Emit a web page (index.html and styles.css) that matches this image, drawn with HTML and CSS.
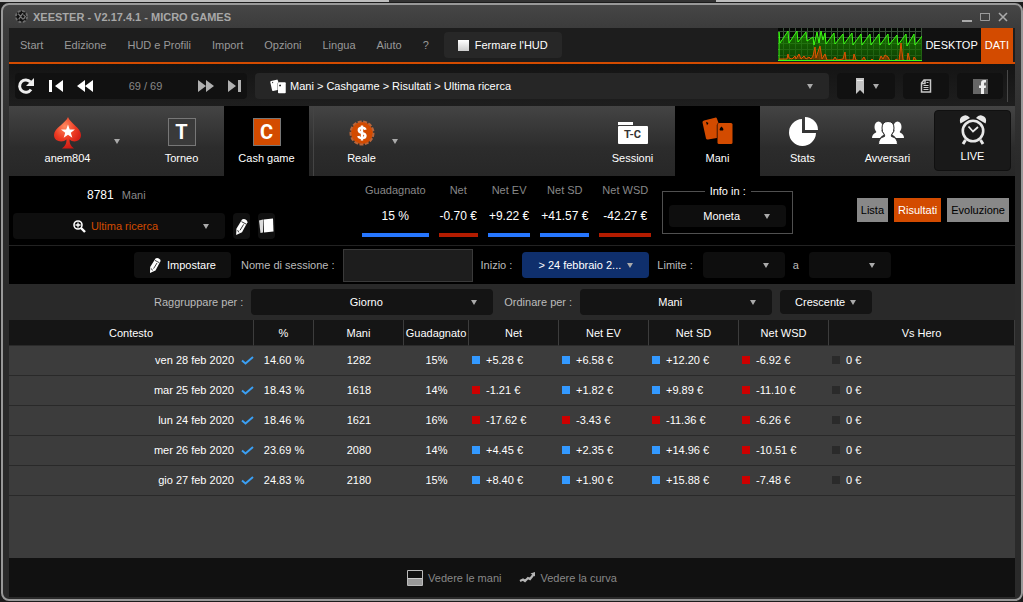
FILE: index.html
```html
<!DOCTYPE html>
<html lang="it">
<head>
    <meta charset="UTF-8">
    <meta name="viewport" content="width=device-width, initial-scale=1.0">
    <title>XEESTER - V2.17.4.1 - MICRO GAMES</title>
    <link rel="stylesheet" href="styles.css">
</head>
<body>
    <!-- shared icons -->
    <svg class="sprite" aria-hidden="true">
        <symbol id="pencil" viewBox="0 0 12 16">
            <path d="M6.5 1.5C8 0 11.8 1.6 11.6 4L6.500 13.500 1 16l.2-6z" fill="#fff"/>
            <path d="M6 3.400l4.300 2.300M8 6l-3.400 5.600M2.400 11.500l1 2" stroke="#111" stroke-width=".8" fill="none"/>
        </symbol>
        <symbol id="cards" viewBox="0 0 31 28">
            <path d="M2 3.500L13 .7q1.500-.5 2 1L16.500 6q-1.700.5-1.700 2v13L6 22.500q-1.500.3-2-1L.5 5.500Q.3 4 2 3.500z" fill="currentColor"/>
            <rect x="15.500" y="6" width="15" height="21" rx="1.500" fill="currentColor"/>
            <path d="M19.500 9.500q2.800 2.500 1.500 4h-3q-1.300-1.500 1.500-4zM4 4.800l2.500 1.200-1.500 2.200z" fill="#000"/>
        </symbol>
    </svg>

    <div class="window">
        <header class="titlebar">
            <svg class="logo" viewBox="0 0 16 16">
                <circle cx="8" cy="8" r="6" fill="#111" stroke="#6c6c6c" stroke-width="2" stroke-dasharray="3 1.7"/>
                <path d="M4.500 5l5 6M9.500 4.500L5 11M10 6l2 2-2 3" stroke="#777" stroke-width="1.400" fill="none"/>
            </svg>
            <h1>XEESTER - V2.17.4.1 - MICRO GAMES</h1>
            <div class="window-buttons">
                <button aria-label="Riduci"><svg width="10" height="10"><path d="M0 9h10" stroke="#aaa" stroke-width="2"/></svg></button>
                <button aria-label="Ingrandisci"><svg width="10" height="10"><path d="M.5 1.500h9v7h-9zM0 1.500h10" stroke="#9a9a9a" fill="none"/></svg></button>
                <button aria-label="Chiudi"><svg width="10" height="10"><path d="M1 1l8 8M9 1L1 9" stroke="#aaa" stroke-width="1.600"/></svg></button>
            </div>
        </header>

        <div class="content">
            <nav class="menu">
                <a href="#">Start</a>
                <a href="#">Edizione</a>
                <a href="#">HUD e Profili</a>
                <a href="#">Import</a>
                <a href="#">Opzioni</a>
                <a href="#">Lingua</a>
                <a href="#">Aiuto</a>
                <a href="#">?</a>
                <button class="btn stop-hud"><span class="stop-icon"></span>Fermare l'HUD</button>
                <div class="menu-right">
                    <svg class="monitor" viewBox="0 0 144 33">
                        <defs>
                            <pattern id="grid" width="6" height="6" patternUnits="userSpaceOnUse"><path d="M5.500 0v6M0 3.500h6" stroke="#3a4f3a"/></pattern>
                            <linearGradient id="green" x1="0" y1="0" x2="0" y2="1"><stop offset="0" stop-color="#1f9a00" stop-opacity=".75"/><stop offset="1" stop-color="#115500" stop-opacity=".65"/></linearGradient>
                        </defs>
                        <rect width="144" height="33" fill="#050805"/>
                        <rect width="144" height="33" fill="url(#grid)"/>
                        <path d="M1 32V4l1 11 8-12 1 12 8-12 1 11 8-10 1 9 6-4 1 8 3-13 2 11 2-12 2 9 2-7 1 11 8-11 1 11 8-10 1 10 8-11 1 12 8-11 1 11 8-11 1 11 8-11 1 11 8-11 1 11 8-10 1 10 8-11 1 12 7-12 1 11 8-10 1 11v18z" fill="url(#green)" stroke="#3cff14"/>
                        <path d="M1 31h8l1-5 1 4 3 1 3-3 1 3 3-5 2 5 3-3 2 3 3-2 2 2 2-3 2-9 1 11 4-12 2 13 3-5 2 6h6l2-3 2 3 6-1 2-7 1 8h7l1-6 2 6 5 1 3-4 2 4h4l2-2 2 2h5l2-5 2 3 2-4 3 2 2 4h5l1-2 3 2 2-18 2 17 4 1 1-8 2 8h3l1-4 3 4h4" fill="#8a3a00" fill-opacity=".7" stroke="#e05500"/>
                        <path d="M0 32.500h144" stroke="#3cff14"/>
                    </svg>
                    <a href="#" class="mode">DESKTOP</a>
                    <a href="#" class="mode active">DATI</a>
                </div>
            </nav>

            <div class="navbar">
                <div class="pager">
                    <button aria-label="Aggiorna"><svg width="18" height="18" viewBox="0 0 18 18"><path d="M14 12.500A6.200 6.200 0 1 1 13.500 5" stroke="#eee" stroke-width="3" fill="none"/><path d="M17 1v8H9z" fill="#eee"/></svg></button>
                    <button aria-label="Primo"><svg width="14" height="12"><path d="M0 0h3v12H0zM14 0v12L6 6z" fill="#fff"/></svg></button>
                    <button aria-label="Precedente"><svg width="16" height="12"><path d="M8 0v12L0 6zM16 0v12L8 6z" fill="#fff"/></svg></button>
                    <span class="page-count">69 / 69</span>
                    <button aria-label="Successivo"><svg width="16" height="12"><path d="M0 0v12l8-6zM8 0v12l8-6z" fill="#b0b0b0"/></svg></button>
                    <button aria-label="Ultimo"><svg width="14" height="12"><path d="M0 0v12l8-6zM10 0h3v12h-3z" fill="#b0b0b0"/></svg></button>
                </div>
                <div class="drop breadcrumb">
                    <svg width="16" height="15" class="white"><use href="#cards"/></svg>
                    <select aria-label="Percorso"><option>Mani &gt; Cashgame &gt; Risultati &gt; Ultima ricerca</option></select>
                </div>
                <button class="drop bookmark" aria-label="Segnalibri"><svg width="8" height="16"><path d="M0 0h8v16l-4-4-4 4z" fill="#c4c4c4"/><path d="M1 2.500h6" stroke="#eee"/></svg></button>
                <button class="tool" aria-label="Note"><svg width="12" height="14"><path d="M4 1h6.500v12H1.500V4zM1.500 4.500H5V1" stroke="#c8c8c8" fill="none" stroke-width="1.500"/><path d="M3.500 6.500h5M3.500 8.500h5M3.500 10.500h5M6.500 3.500h2" stroke="#c8c8c8"/></svg></button>
                <button class="tool" aria-label="Facebook"><svg width="15" height="15"><path d="M0 0h15v15H0z" fill="#666"/><path d="M8 15V9H6V6.500h2V4q0-3 3-3h2v2.500h-1.200q-.8 0-.8.800v2.200h2L12.700 9H11v6z" fill="#eee"/></svg></button>
                <span class="separator"></span>
            </div>

            <div class="ribbon">
                <div class="account">
                    <button class="ribbon-item">
                        <svg width="30" height="32" viewBox="0 0 30 32">
                            <defs><radialGradient id="red" cx=".4" cy=".3" r=".8"><stop offset="0" stop-color="#ff8a60"/><stop offset=".5" stop-color="#ec3a22"/><stop offset="1" stop-color="#c51010"/></radialGradient></defs>
                            <path d="M15 0c2 6 13 11 13 18 0 7-8 8-11.500 4.500C16.500 27 18 29 21 31.500H9c3-2.500 4.500-4.500 4.500-9C10 26 1 25 1 18 1 11 13 6 15 0z" fill="url(#red)"/>
                            <path d="M15 7.500l1.700 4.900 5.200.1-4.100 3.200 1.500 5-4.300-3-4.300 3 1.500-5L8 12.500l5.200-.1z" fill="#fff"/>
                        </svg>
                        anem804
                    </button>
                    <span class="caret"></span>
                </div>
                <button class="ribbon-item"><span class="letter">T</span>Torneo</button>
                <button class="ribbon-item active"><span class="letter">C</span>Cash game</button>
                <div class="account reale">
                    <button class="ribbon-item">
                        <svg width="26" height="32" viewBox="0 0 26 32">
                            <circle cx="13" cy="16" r="11" fill="#d34b00"/>
                            <circle cx="13" cy="16" r="11.500" fill="none" stroke="#b9653a" stroke-width="2" stroke-dasharray="4 1.500"/>
                            <circle cx="13" cy="16" r="9.500" fill="#d34b00"/>
                            <path d="M16.500 12.800q-.5-2-3.500-2-3.200 0-3.200 2.400 0 2 3.200 2.700 3.500.8 3.500 2.900 0 2.300-3.500 2.300-3.200 0-3.700-2.100M13 8.500v15" stroke="#fff" stroke-width="2.400" fill="none"/>
                        </svg>
                        Reale
                    </button>
                    <span class="caret"></span>
                </div>
                <button class="ribbon-item push">
                    <span class="folder">T-C</span>
                    Sessioni
                </button>
                <button class="ribbon-item active"><svg width="31" height="28" class="orange raised"><use href="#cards"/></svg>Mani</button>
                <button class="ribbon-item"><svg width="30" height="30" viewBox="0 0 30 30"><path d="M14 2v14h14a13.500 13.500 0 1 1-14-14z" fill="#fff"/><path d="M17 0a13 13 0 0 1 13 13H17z" fill="#fff"/></svg>Stats</button>
                <button class="ribbon-item">
                    <svg width="32" height="24" viewBox="0 0 32 24" class="raised">
                        <g fill="#fff">
                            <ellipse cx="6.500" cy="6" rx="4" ry="5.500"/><path d="M0 17q0-4 4-5.500l1-2h4l3 4Q9 15 8 17z"/>
                            <ellipse cx="25.500" cy="6" rx="4" ry="5.500"/><path d="M32 17q0-4-4-5.500l-1-2h-4l-3 4q3 1.500 4 3.500z"/>
                            <path d="M6.500 23.500q0-7 6-8 .5-1.500-.5-2.500-2-2-2-6 0-6.500 6-6.500t6 6.500q0 4-2 6-1 1-.5 2.500 6 1 6 8z" stroke="#2f2f2f"/>
                        </g>
                    </svg>
                    Avversari
                </button>
                <button class="ribbon-item live">
                    <svg width="28" height="30" viewBox="0 0 28 30">
                        <g fill="none" stroke="#e8e8e8"><circle cx="14" cy="16" r="10.200" stroke-width="2.600"/><path d="M9.500 11.500L14 16.500l5-4.500" stroke-width="1.800"/><path d="M6.500 25L4 29M21.500 25l2.500 4" stroke-width="3"/></g>
                        <path d="M1.500 8.500Q-.5 3 4 1q4-2 7 2zM26.500 8.500Q28.500 3 24 1q-4-2-7 2z" fill="#e8e8e8"/>
                    </svg>
                    LIVE
                </button>
            </div>

            <section class="summary">
                <div class="search">
                    <p class="hands"><b>8781</b> Mani</p>
                    <div class="search-row">
                        <div class="drop last-search">
                            <svg width="13" height="13" viewBox="0 0 13 13"><circle cx="5" cy="5" r="4" fill="none" stroke="#fff" stroke-width="1.600"/><path d="M8 8l4 4" stroke="#fff" stroke-width="2.400"/><path d="M5 2.500v5M2.500 5h5" stroke="#fff" stroke-width="1.300"/></svg>
                            <select aria-label="Ricerca"><option>Ultima ricerca</option></select>
                        </div>
                        <button class="btn small" aria-label="Modifica"><svg width="13" height="17"><use href="#pencil"/></svg></button>
                        <button class="btn small" aria-label="Copia"><svg width="15" height="16" viewBox="0 0 15 16"><path d="M0 2.500L4 1.500v13l-2.500.5z" fill="#ddd"/><path d="M4.500 1.500L14 .5l.5 13L5 14.500z" fill="#fff"/></svg></button>
                    </div>
                </div>
                <dl class="totals">
                    <div class="up"><dt>Guadagnato</dt><dd>15 %</dd></div>
                    <div class="down"><dt>Net</dt><dd>-0.70 €</dd></div>
                    <div class="up"><dt>Net EV</dt><dd>+9.22 €</dd></div>
                    <div class="up"><dt>Net SD</dt><dd>+41.57 €</dd></div>
                    <div class="down"><dt>Net WSD</dt><dd>-42.27 €</dd></div>
                </dl>
                <fieldset class="info">
                    <legend>Info in :</legend>
                    <div class="drop"><select aria-label="Info in"><option>Moneta</option></select></div>
                </fieldset>
                <div class="views">
                    <button>Lista</button>
                    <button class="active">Risultati</button>
                    <button>Evoluzione</button>
                </div>
            </section>

            <form class="filters">
                <button type="button" class="btn set"><svg width="12" height="16"><use href="#pencil"/></svg>Impostare</button>
                <label for="session">Nome di sessione :</label>
                <input type="text" id="session">
                <label for="start">Inizio :</label>
                <div class="drop start"><select id="start"><option>&gt; 24 febbraio 2...</option></select></div>
                <label for="limit">Limite :</label>
                <div class="drop limit"><select id="limit"><option></option></select></div>
                <label for="limit-to">a</label>
                <div class="drop limit"><select id="limit-to"><option></option></select></div>
            </form>

            <form class="grouping">
                <label for="group">Raggruppare per :</label>
                <div class="drop group"><select id="group"><option>Giorno</option></select></div>
                <label for="order">Ordinare per :</label>
                <div class="drop order"><select id="order"><option>Mani</option></select></div>
                <div class="drop direction"><select aria-label="Direzione"><option>Crescente</option></select></div>
            </form>

            <main class="results">
                <table>
                    <colgroup>
                        <col class="c-context"><col class="c-percent"><col class="c-net"><col class="c-gain">
                        <col class="c-net"><col class="c-net"><col class="c-net"><col class="c-net"><col>
                    </colgroup>
                    <thead>
                        <tr><th>Contesto</th><th>%</th><th>Mani</th><th>Guadagnato</th><th>Net</th><th>Net EV</th><th>Net SD</th><th>Net WSD</th><th>Vs Hero</th></tr>
                    </thead>
                    <tbody id="rows"></tbody>
                </table>
            </main>

            <footer class="footer">
                <button><svg width="16" height="16"><path d="M.5.500h15v15H.500z" fill="#111" stroke="#bbb"/><path d="M1 8h14v7H1z" fill="#999"/><path d="M1 8.500h14" stroke="#ccc"/></svg>Vedere le mani</button>
                <button><svg width="16" height="11"><path d="M1 9l3-1.500 2 1.500 3-3 2 1 4-5" stroke="#b5b5b5" stroke-width="2.200" fill="none"/><path d="M11.500 1.500L16 0v4.500z" fill="#b5b5b5"/></svg>Vedere la curva</button>
            </footer>
        </div>
    </div>

    <script src="script.js"></script>
</body>
</html>
```

FILE: styles.css
```css
* {
    box-sizing: border-box;
}

body {
    margin: 0;
    padding: 3px 0 1px 1px;
    height: 100vh;
    font-family: "Liberation Sans", Arial, sans-serif;
    font-size: 11px;
    line-height: 14px;
    color: #fff;
    background: linear-gradient(90deg, #bdbdbd 38%, #333 38%, #333 70%, #bdbdbd 70%) top / 100% 2px no-repeat #1c1c1c;
}

button, select, input {
    font: inherit;
    color: inherit;
    background: none;
    border: 0;
    margin: 0;
    padding: 0;
}

a {
    color: inherit;
    text-decoration: none;
}

svg {
    display: block;
    flex: none;
}

.sprite {
    position: absolute;
    width: 0;
    height: 0;
}

.white {
    color: #fff;
}

.orange {
    color: #d34b00;
}

/* window */
.window {
    display: flex;
    flex-direction: column;
    height: 100%;
    padding: 0 6px 2px;
    border: 2px solid #999;
    border-radius: 8px;
    background: linear-gradient(#464646, #3c3c3c 22px, #2a2a2a 160px, #2a2a2a);
}

.titlebar {
    display: flex;
    align-items: center;
    height: 23px;
    padding: 0 7px 0 5px;
    flex: none;
}

.logo {
    width: 15px;
    height: 15px;
}

.titlebar h1 {
    margin: 0 auto 0 4px;
    font-size: 11px;
    color: #a8a8a8;
}

.window-buttons {
    display: flex;
    gap: 8px;
}

.content {
    display: flex;
    flex-direction: column;
    flex: 1;
    min-height: 0;
    background: #000;
}

/* menu */
.menu {
    display: flex;
    align-items: center;
    gap: 21px;
    height: 36px;
    flex: none;
    padding-left: 11px;
    color: #999;
    background: #1d1d1d;
    border-bottom: 2px solid #d34b00;
}

.btn {
    display: flex;
    align-items: center;
    justify-content: center;
    border-radius: 4px;
    background: #101010;
}

.stop-hud {
    gap: 6px;
    width: 118px;
    height: 26px;
    margin-left: -6px;
    color: #fff;
    background: #272727;
}

.stop-icon {
    width: 11px;
    height: 11px;
    background: linear-gradient(#fff, #ccc);
}

.menu-right {
    display: flex;
    align-self: stretch;
    margin-left: auto;
    padding-right: 2px;
}

.monitor {
    width: 144px;
    height: 33px;
}

.mode {
    display: flex;
    align-items: center;
    padding: 0 3px;
    color: #fff;
    font-size: 11px;
    background: #111;
}

.mode.active {
    padding: 0 4px;
    background: #d34b00;
}

/* navigation */
.navbar {
    display: flex;
    align-items: center;
    gap: 8px;
    height: 42px;
    flex: none;
    padding: 2px 7px 0 6px;
    background: linear-gradient(#141414, #1e1e1e);
}

.pager {
    display: flex;
    align-items: center;
    gap: 14px;
    width: 232px;
    height: 26px;
    padding: 0 5px 0 2px;
    border-radius: 4px;
    background: #111;
}

.page-count {
    flex: 1;
    text-align: center;
    color: #888;
}

.drop {
    position: relative;
    display: flex;
    align-items: center;
    justify-content: center;
    height: 26px;
    border-radius: 4px;
    background: #0e0e0e;
}

.drop::after,
.caret {
    border: 3px solid transparent;
    border-top: 5px solid #aaa;
    border-bottom: 0;
}

.drop::after {
    content: "";
    position: absolute;
    right: 16px;
    pointer-events: none;
}

.drop select {
    appearance: none;
    width: 100%;
    height: 100%;
    padding: 0 12px 0 0;
    text-align-last: center;
}

.breadcrumb {
    flex: 1;
    gap: 4px;
    padding-left: 15px;
    background: #262626;
}

.breadcrumb select {
    text-align-last: left;
}

.bookmark {
    width: 58px;
    padding-right: 12px;
    background: #111;
}

.tool {
    display: flex;
    align-items: center;
    justify-content: center;
    width: 46px;
    height: 26px;
    border-radius: 4px;
    background: #111;
}

.separator {
    width: 1px;
    height: 32px;
    margin-left: -4px;
    background: #484848;
}

/* ribbon */
.ribbon {
    display: flex;
    height: 70px;
    flex: none;
    padding-right: 4px;
    background: linear-gradient(#444, #2c2c2c 60%, #272727);
}

.ribbon-item {
    display: flex;
    flex-direction: column;
    align-items: center;
    justify-content: flex-end;
    gap: 4px;
    width: 85px;
    padding-bottom: 11px;
}

.ribbon-item.active {
    background: #000;
}

.account {
    display: flex;
    align-items: center;
    width: 130px;
    padding-left: 16px;
}

.account .ribbon-item {
    height: 100%;
    gap: 2px;
}

.reale {
    margin-left: 4px;
    padding-left: 5px;
    border-left: 1px solid #444;
}

.caret {
    margin-left: 4px;
}

.reale .caret {
    margin-left: -12px;
}

.letter {
    width: 28px;
    height: 28px;
    margin-bottom: 1px;
    border: 1px solid #777;
    font: bold 20px/26px Roboto, sans-serif;
    background: #3a3a3a;
}

.active .letter {
    background: #d34b00;
}

.raised {
    margin-bottom: 2px;
}

.folder {
    position: relative;
    width: 30px;
    height: 18px;
    margin-bottom: 3px;
    border-radius: 1px;
    font: bold 11px/18px Roboto, sans-serif;
    color: #333;
    background: #fff;
}

.folder::before {
    content: "";
    position: absolute;
    left: 0;
    top: -4px;
    width: 15px;
    height: 3px;
    background: #fff;
}

.push {
    margin-left: auto;
}

.live {
    width: 77px;
    height: 61px;
    margin: 4px 0 0 4px;
    padding-bottom: 7px;
    border: 1px solid #101010;
    border-radius: 4px;
    background: #191919;
}

/* summary */
.summary {
    display: flex;
    height: 70px;
    flex: none;
    padding: 0 6px 0 4px;
    border-bottom: 1px solid #222;
}

.search {
    width: 349px;
}

.hands {
    margin: 12px 0 11px 74px;
    color: #888;
}

.hands b {
    margin-right: 5px;
    font-size: 12px;
    font-weight: normal;
    color: #fff;
}

.search-row {
    display: flex;
    gap: 8px;
}

.last-search {
    width: 212px;
    gap: 5px;
    padding-left: 5px;
    color: #d34b00;
}

.last-search select {
    width: auto;
}

.small {
    width: 17px;
    height: 26px;
}

.totals {
    display: flex;
    gap: 10px;
    margin: 7px 11px 0 0;
    text-align: center;
    white-space: nowrap;
}

.totals div {
    height: 54px;
    border-bottom: 4px solid #2676ff;
}

.totals .down {
    border-color: #b31c00;
}

.totals dt {
    padding: 0 3px;
    color: #888;
}

.totals dd {
    margin: 12px 0 0;
    padding: 0 1px;
    font-size: 12px;
}

.info {
    width: 131px;
    height: 50px;
    margin: 8px 0 0;
    padding: 7px 6px 6px;
    border: 1px solid #505050;
}

.info legend {
    margin: 0 auto;
    padding: 0 5px;
}

.info .drop {
    height: 22px;
}

.views {
    display: flex;
    gap: 6px;
    margin: 22px 0 0 auto;
}

.views button {
    height: 24px;
    padding: 0 4px;
    color: #000;
    background: #888;
}

.views .active {
    color: #fff;
    background: #d34b00;
}

/* filters */
.filters,
.grouping {
    display: flex;
    align-items: center;
    flex: none;
    gap: 8px;
    color: #bbb;
}

.filters select,
.grouping select,
.set {
    color: #fff;
}

.filters {
    height: 38px;
    padding-left: 125px;
}

.set {
    gap: 6px;
    width: 97px;
    height: 26px;
    margin-right: 2px;
}

.filters input {
    width: 130px;
    height: 33px;
    padding: 0 6px;
    border: 1px solid #3a3a3a;
    background: #1d1d1d;
}

.filters .drop {
    margin-left: 2px;
}

.start {
    width: 127px;
    background: #0f2f6c;
}

.limit {
    width: 82px;
}

.grouping {
    height: 36px;
    padding-left: 145px;
    background: #292929;
}

.grouping .drop {
    background: #141414;
}

.group {
    width: 242px;
    margin-right: 3px;
}

.order {
    width: 192px;
}

.direction {
    width: 92px;
    height: 24px;
}

/* results */
.results {
    flex: 1;
    min-height: 0;
    background: #3c3c3c;
}

table {
    width: 100%;
    table-layout: fixed;
    border-collapse: separate;
    border-spacing: 0;
    text-align: center;
}

.c-context { width: 245px; }
.c-percent { width: 60px; }
.c-gain { width: 65px; }
.c-net { width: 90px; }

th {
    height: 26px;
    padding: 0;
    white-space: nowrap;
    font-weight: normal;
    background: #151515;
    border-right: 1px solid #3c3c3c;
    border-bottom: 1px solid #2a2a2a;
}

td {
    height: 30px;
    padding: 0 0 2px;
    border-bottom: 1px solid #292929;
}

.context {
    display: flex;
    align-items: center;
    justify-content: flex-end;
    gap: 7px;
}

.amount {
    display: flex;
    align-items: center;
    gap: 6px;
    padding-left: 3px;
}

.amount::before {
    content: "";
    width: 8px;
    height: 8px;
    background: #3399ff;
}

.amount.minus::before {
    background: #c00;
}

.amount.zero::before {
    background: #2a2a2a;
}

/* footer */
.footer {
    display: flex;
    align-items: center;
    justify-content: center;
    gap: 18px;
    height: 39px;
    flex: none;
    color: #888;
    background: #111;
}

.footer button {
    display: flex;
    align-items: center;
    gap: 5px;
}
```

FILE: script.js
```js
const rows = [
    ['ven 28 feb 2020', '14.60 %', '1282', '15%', '+5.28 €', '+6.58 €', '+12.20 €', '-6.92 €', '0 €'],
    ['mar 25 feb 2020', '18.43 %', '1618', '14%', '-1.21 €', '+1.82 €', '+9.89 €', '-11.10 €', '0 €'],
    ['lun 24 feb 2020', '18.46 %', '1621', '16%', '-17.62 €', '-3.43 €', '-11.36 €', '-6.26 €', '0 €'],
    ['mer 26 feb 2020', '23.69 %', '2080', '14%', '+4.45 €', '+2.35 €', '+14.96 €', '-10.51 €', '0 €'],
    ['gio 27 feb 2020', '24.83 %', '2180', '15%', '+8.40 €', '+1.90 €', '+15.88 €', '-7.48 €', '0 €']
];

const check = '<svg width="13" height="10"><path d="M1 5.500l3.500 3L12 2" stroke="#3ba0f5" stroke-width="2" fill="none"/></svg>';

function amount(value) {
    const sign = value[0] === '-' ? 'minus' : value[0] === '+' ? 'plus' : 'zero';
    return `<td><div class="amount ${sign}">${value}</div></td>`;
}

document.getElementById('rows').innerHTML = rows.map(row => `
    <tr>
        <td><div class="context">${row[0]}${check}</div></td>
        ${row.slice(1, 4).map(value => `<td>${value}</td>`).join('')}
        ${row.slice(4).map(amount).join('')}
    </tr>`).join('');
```
